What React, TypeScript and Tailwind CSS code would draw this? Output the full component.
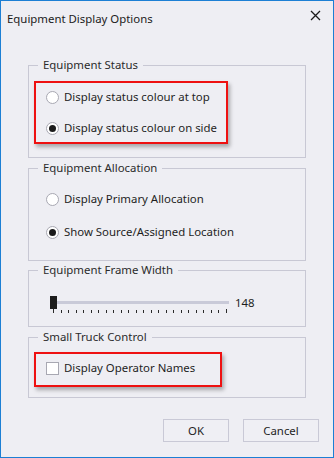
import React from "react";

const font = { fontFamily: '"Noto Sans", "Liberation Sans", sans-serif' };

const Radio = ({ checked }: { checked?: boolean }) => (
  <span className="w-[13px] h-[13px] shrink-0 rounded-full border border-[#a8a8b2] bg-white flex items-center justify-center">
    {checked && <span className="w-[7px] h-[7px] rounded-full bg-[#1b1b1b]" />}
  </span>
);

const Row = ({ children, label }: { children: React.ReactNode; label: string }) => (
  <div className="flex items-center h-[20px] gap-[5px]">
    {children}
    <span className="text-[11.4px] text-[#1e1e1e] leading-[16px] whitespace-nowrap">{label}</span>
  </div>
);

const Group = ({ title, height, className, children }: { title: string; height: string; className?: string; children: React.ReactNode }) => (
  <fieldset className={`border border-[#c8c8d4] ml-[27px] w-[278px] p-0 ${height} ${className ?? ""}`}>
    <legend className="ml-[9px] px-[5px] text-[11.4px] leading-[16px] text-[#2b2b2b]">{title}</legend>
    {children}
  </fieldset>
);

export default function App() {
  const ticks = Array.from({ length: 24 });

  return (
    <div style={font} className="w-[334px] h-[458px] bg-[#eeeef3] border border-[#1c7fd4] flex flex-col">
      <div className="h-[56px] flex items-start justify-between pl-[6px] pr-[12px]">
        <span className="mt-[10px] text-[11.4px] leading-[16px] text-[#1b1b1b]">Equipment Display Options</span>
        <svg className="mt-[9px]" width="11" height="11" viewBox="0 0 11 11">
          <path d="M1 1 L10 10 M10 1 L1 10" stroke="#1b1b1b" strokeWidth="1.3" />
        </svg>
      </div>

      <Group title="Equipment Status" height="h-[101px]">
        <div className="mt-[8px] ml-[5px] w-[194px] h-[63px] border-2 border-[#ee1111] shadow-[2px_3px_4px_rgba(0,0,0,0.3)] pt-[4px] pl-[10px] flex flex-col gap-[11px]">
          <Row label="Display status colour at top">
            <Radio />
          </Row>
          <Row label="Display status colour on side">
            <Radio checked />
          </Row>
        </div>
      </Group>

      <Group title="Equipment Allocation" height="h-[101px]" className="mt-[2px]">
        <div className="mt-[13px] ml-[17px] flex flex-col gap-[13px]">
          <Row label="Display Primary Allocation">
            <Radio />
          </Row>
          <Row label="Show Source/Assigned Location">
            <Radio checked />
          </Row>
        </div>
      </Group>

      <Group title="Equipment Frame Width" height="h-[65px]" className="mt-[1px]">
        <div className="mt-[18px] ml-[21px] flex items-start">
          <div className="w-[179px] flex flex-col">
            <div className="flex items-center h-[13px]">
              <span className="w-[7px] h-[13px] bg-[#1c1c1c]" />
              <span className="flex-1 h-[3px] bg-[#c9cad8]" />
            </div>
            <div className="flex justify-between items-end pl-[3px] pr-[2px] h-[4px]">
              {ticks.map((_, i) => (
                <span key={i} className={`w-px bg-[#2a2a2a] ${i === 0 || i === ticks.length - 1 ? "h-[4px]" : "h-[3px]"}`} />
              ))}
            </div>
          </div>
          <span className="ml-[6px] h-[13px] flex items-center text-[11.4px] text-[#1e1e1e]">148</span>
        </div>
      </Group>

      <Group title="Small Truck Control" height="h-[69px]" className="mt-[2px]">
        <div className="mt-[7px] ml-[5px] w-[188px] h-[35px] border-2 border-[#ee1111] shadow-[2px_3px_4px_rgba(0,0,0,0.3)] pt-[4px] pl-[10px]">
          <Row label="Display Operator Names">
            <span className="w-[13px] h-[13px] shrink-0 border border-[#a8a8b2] bg-white" />
          </Row>
        </div>
      </Group>

      <div className="mt-[21px] flex justify-end gap-[14px] pr-[14px]">
        <button className="w-[66px] h-[23px] border border-[#c9c9d6] bg-[#efeff4] text-[11.4px] text-[#1e1e1e]">OK</button>
        <button className="w-[76px] h-[23px] border border-[#c9c9d6] bg-[#efeff4] text-[11.4px] text-[#1e1e1e]">Cancel</button>
      </div>
    </div>
  );
}
